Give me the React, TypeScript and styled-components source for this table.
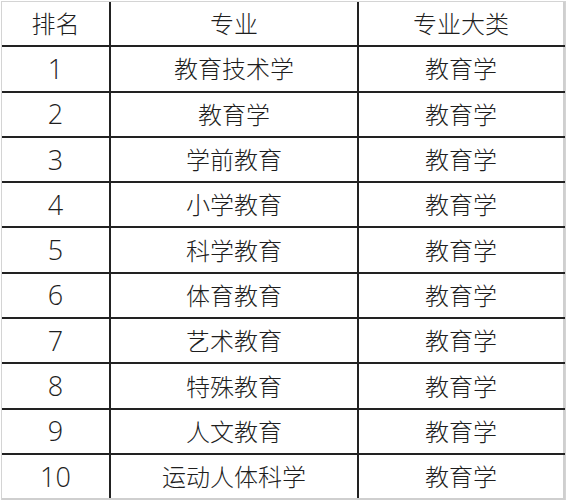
import styled, { createGlobalStyle } from "styled-components"

const rows = [
    {rank: "1", major: "教育技术学", category: "教育学"},
    {rank: "2", major: "教育学", category: "教育学"},
    {rank: "3", major: "学前教育", category: "教育学"},
    {rank: "4", major: "小学教育", category: "教育学"},
    {rank: "5", major: "科学教育", category: "教育学"},
    {rank: "6", major: "体育教育", category: "教育学"},
    {rank: "7", major: "艺术教育", category: "教育学"},
    {rank: "8", major: "特殊教育", category: "教育学"},
    {rank: "9", major: "人文教育", category: "教育学"},
    {rank: "10", major: "运动人体科学", category: "教育学"},
]

const GlobalStyle = createGlobalStyle`
    html, body {
        margin: 0;
        padding: 0;
        background: #ffffff;
    }
`

export default function App(){
    return (
        <>
            <GlobalStyle />
            <Page>
                <Table>
                    <Row>
                        <Cell $width={109}>排名</Cell>
                        <Cell $width={248}>专业</Cell>
                        <Cell $width={206} $end>专业大类</Cell>
                    </Row>
                    {
                        rows.map((row, index) => (
                            <Row key={index} $last={index === rows.length - 1}>
                                <Cell $width={109} $number>{row.rank}</Cell>
                                <Cell $width={248}>{row.major}</Cell>
                                <Cell $width={206} $end>{row.category}</Cell>
                            </Row>
                        ))
                    }
                </Table>
            </Page>
        </>
    )
}

const Page = styled.div`
    width: 567px;
    height: 500px;
    padding: 1px 0 0 1px;
    box-sizing: border-box;
    background: #ffffff;
`

const Table = styled.div`
    width: 565px;
    border: 1px solid #d4d4d4;
    border-bottom: none;
    box-sizing: border-box;
    display: flex;
    flex-direction: column;
    font-family: "Noto Sans CJK SC", "Noto Sans", sans-serif;
    font-weight: 300;
    color: #1e1e1e;
    font-size: 24px;
`

const Row = styled.div<{ $last?: boolean }>`
    display: flex;
    height: 45.3px;
    box-sizing: border-box;
    border-bottom: 2px solid ${p => p.$last ? "#cfcfcf" : "#222222"};
`

const Cell = styled.div<{ $width: number; $end?: boolean; $number?: boolean }>`
    width: ${p => p.$width}px;
    display: flex;
    align-items: center;
    justify-content: center;
    box-sizing: border-box;
    border-right: 2px solid ${p => p.$end ? "#cfcfcf" : "#222222"};
    line-height: 1;
    padding-bottom: 1px;
    ${p => p.$number && `
        font-family: "Open Sans", "Noto Sans", sans-serif;
        font-size: 27px;
        font-weight: 300;
    `}
`
